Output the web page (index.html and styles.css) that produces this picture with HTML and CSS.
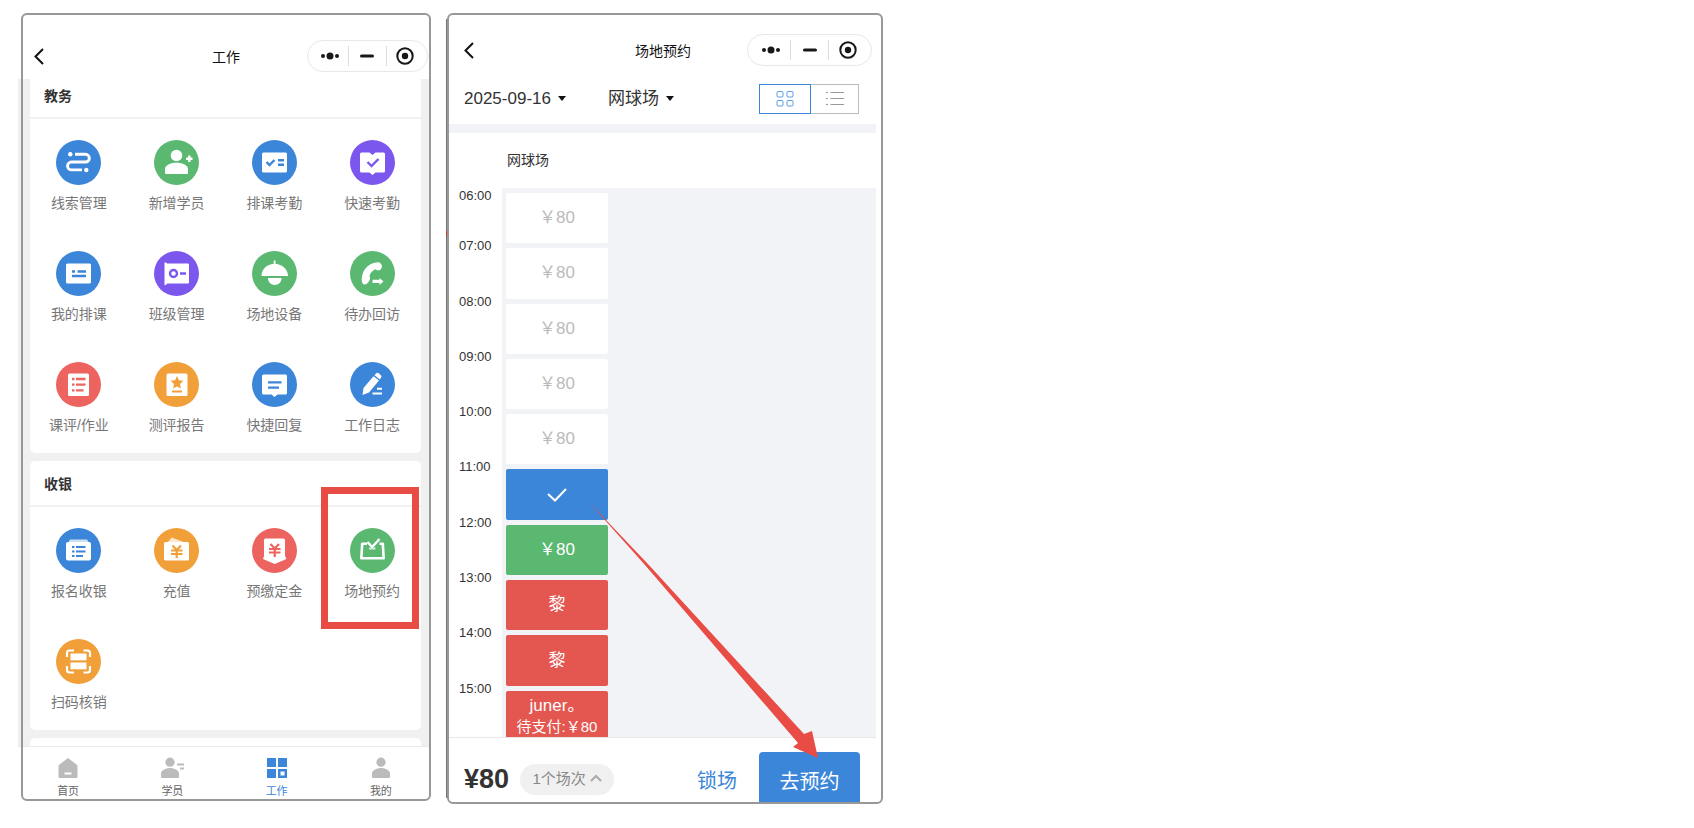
FILE: index.html
```html
<!DOCTYPE html>
<html lang="zh-CN">
<head>
    <meta charset="UTF-8">
    <meta name="viewport" content="width=device-width, initial-scale=1.0">
    <title>场地预约</title>
    <link rel="stylesheet" href="styles.css">
</head>
<body>
    <main class="screens">
        <!-- 工作台 -->
        <section class="phone phone-work">
            <header class="nav-bar">
                <button class="back" aria-label="返回">
                    <svg width="10" height="17" viewBox="0 0 10 17"><path d="M9 1L1.500 8.500L9 16"/></svg>
                </button>
                <h1>工作</h1>
                <div class="capsule">
                    <button aria-label="更多"><svg width="20" height="20" viewBox="0 0 20 20"><circle cx="3" cy="10" r="2"/><circle cx="10" cy="10" r="3.500"/><circle cx="17" cy="10" r="2"/></svg></button>
                    <button aria-label="最小化"><svg width="20" height="20" viewBox="0 0 20 20"><path class="bar" d="M4.500 10H15.500"/></svg></button>
                    <button aria-label="关闭"><svg width="20" height="20" viewBox="0 0 20 20"><circle class="ring" cx="10" cy="10" r="7.700"/><circle cx="10" cy="10" r="3.200"/></svg></button>
                </div>
            </header>

            <div class="work-body">
                <section class="card">
                    <h2>教务</h2>
                    <div class="menu">
                        <a href="#" class="menu-item">
                            <svg class="icon blue" viewBox="0 0 45 45"><circle cx="14.300" cy="14.300" r="2.200" class="w"/><circle cx="30.300" cy="30" r="2.200" class="w"/><path class="s" d="M19 14.300H29.500a3.800 3.800 0 0 1 0 7.700H15.500a3.900 3.900 0 0 0 0 7.900H26" stroke-width="2.900"/></svg>
                            <span>线索管理</span>
                        </a>
                        <a href="#" class="menu-item">
                            <svg class="icon green" viewBox="0 0 45 45"><circle cx="22.500" cy="15.500" r="5.800" class="w"/><path class="w" d="M11 33V28C14 21 31 21 34 28V33a1 1 0 0 1-1 1H12a1 1 0 0 1-1-1z"/><path class="s" d="M35.300 15.500V22M32 18.700H38.500" stroke-width="2.400"/></svg>
                            <span>新增学员</span>
                        </a>
                        <a href="#" class="menu-item">
                            <svg class="icon blue" viewBox="0 0 45 45"><rect x="10" y="12.500" width="25" height="20" rx="1.500" class="w"/><path class="c" d="M14.500 22L17.500 25L22.500 20M26 20.300H32M26 24.700H32" stroke-width="2.400"/></svg>
                            <span>排课考勤</span>
                        </a>
                        <a href="#" class="menu-item">
                            <svg class="icon purple" viewBox="0 0 45 45"><path class="w" d="M11.500 12.500H19.500L22.500 15L25.500 12.500H33.500a1.500 1.500 0 0 1 1.500 1.500V31a1.500 1.500 0 0 1-1.500 1.500H25.500L22.500 35L19.500 32.500H11.500a1.500 1.500 0 0 1-1.500-1.500V14a1.500 1.500 0 0 1 1.500-1.500z"/><path class="c" d="M17.500 22L21.500 26L28.500 19" stroke-width="2.400"/></svg>
                            <span>快速考勤</span>
                        </a>
                        <a href="#" class="menu-item">
                            <svg class="icon blue" viewBox="0 0 45 45"><rect x="10" y="12.500" width="25" height="20" rx="1.500" class="w"/><path class="c" d="M16 20.500H19M21.500 20.500H30M16 25H30" stroke-width="2.300"/></svg>
                            <span>我的排课</span>
                        </a>
                        <a href="#" class="menu-item">
                            <svg class="icon purple" viewBox="0 0 45 45"><path class="w" d="M10.500 11.500H12L13 12.500H34a1 1 0 0 1 1 1V31.500a1 1 0 0 1-1 1H13L12 34H10.500z"/><circle cx="19.500" cy="22.500" r="3.500" class="c" stroke-width="2.400"/><path class="c" d="M26 22.500H32" stroke-width="2.300"/></svg>
                            <span>班级管理</span>
                        </a>
                        <a href="#" class="menu-item">
                            <svg class="icon green" viewBox="0 0 45 45"><path class="w" d="M9.500 25C9.500 18 15 13.500 21.700 12.800V9.500H23.500V12.800C30 13.500 36 18 36 25z"/><path class="w" d="M16 27H29.500C29.500 36.300 16 36.300 16 27z"/></svg>
                            <span>场地设备</span>
                        </a>
                        <a href="#" class="menu-item">
                            <svg class="icon green" viewBox="0 0 45 45"><path class="w" d="M13.500 33.300C10.500 31 11.500 23 15 18Q20.500 11 29 11.300Q32.500 13 31.800 16.500Q30.800 19.500 28 19.500L25 18.300Q20.500 21 19.500 25Q21 28 18.500 31Q16 34.300 13.500 33.300z"/><path class="w" d="M22.500 28.800H29.500V27L33.500 30.500L29.500 34V32H22.500z"/></svg>
                            <span>待办回访</span>
                        </a>
                        <a href="#" class="menu-item">
                            <svg class="icon coral" viewBox="0 0 45 45"><rect x="12" y="11.500" width="21" height="22.500" rx="1.500" class="w"/><path class="c" d="M16 17H18.500M20 17H29.500M16 22.700H18.500M20 22.700H29.500M16 28.400H18.500M20 28.400H27.500" stroke-width="2.300"/></svg>
                            <span>课评/作业</span>
                        </a>
                        <a href="#" class="menu-item">
                            <svg class="icon orange" viewBox="0 0 45 45"><rect x="12.500" y="11.500" width="21" height="22.500" rx="1.500" class="w"/><path class="f" d="M23 14L24.900 18.200L29.300 18.700L26 21.900L26.800 26.600L23 24.400L19.200 26.600L20 21.900L16.700 18.700L21.100 18.200z"/><path class="c" d="M18 29.500H28" stroke-width="2.200"/></svg>
                            <span>测评报告</span>
                        </a>
                        <a href="#" class="menu-item">
                            <svg class="icon blue" viewBox="0 0 45 45"><path class="w" d="M11.500 12.500H33.500a1.500 1.500 0 0 1 1.500 1.500V31a1.500 1.500 0 0 1-1.500 1.500H25.500L22.500 35L19.500 32.500H11.500a1.500 1.500 0 0 1-1.500-1.500V14a1.500 1.500 0 0 1 1.500-1.500z"/><path class="c" d="M16 20.300H29.500M16 25.600H27" stroke-width="2.300"/></svg>
                            <span>快捷回复</span>
                        </a>
                        <a href="#" class="menu-item">
                            <svg class="icon blue" viewBox="0 0 45 45"><path class="w" d="M12.500 33L13.500 26L23.500 14.300L29 18.600L19 30.500z"/><path class="w" d="M24.500 13.300L26.300 11.200Q27.500 10.300 28.700 11.200L31 13.200Q32 14.500 31 15.800L29.800 17.500z"/><path class="s" d="M27 26.700H32M22.500 31.500H32" stroke-width="1.900"/></svg>
                            <span>工作日志</span>
                        </a>
                    </div>
                </section>

                <section class="card">
                    <h2>收银</h2>
                    <div class="menu">
                        <a href="#" class="menu-item">
                            <svg class="icon blue" viewBox="0 0 45 45"><path class="w pale" d="M14 11.500H31L33 15H12z"/><rect x="10" y="14" width="25" height="18.500" rx="2" class="w"/><path class="c" d="M16 19H18.500M20 19H29.500M16 23.500H18.500M20 23.500H29.500M16 28H18.500M20 28H27" stroke-width="2.200"/></svg>
                            <span>报名收银</span>
                        </a>
                        <a href="#" class="menu-item">
                            <svg class="icon orange" viewBox="0 0 45 45"><path class="w pale" d="M14 14L17.500 9.500L31 14.500z"/><rect x="10" y="14" width="25" height="18.500" rx="1.500" class="w"/><path class="c" d="M18.500 17.500L22.700 22L27 17.500M17 22.500H28.500M17 26H28.500M22.700 22V30" stroke-width="2.200"/></svg>
                            <span>充值</span>
                        </a>
                        <a href="#" class="menu-item">
                            <svg class="icon coral" viewBox="0 0 45 45"><path class="w" d="M13.500 10.500H31.500a1.500 1.500 0 0 1 1.500 1.500V28L34.500 31L22.700 36L11 31L12 28V12a1.500 1.500 0 0 1 1.500-1.500z"/><path class="c" d="M18.500 16L22.700 20.500L27 16M17 21H28.500M17 24.500H28.500M22.700 20.500V29" stroke-width="2.200"/></svg>
                            <span>预缴定金</span>
                        </a>
                        <a href="#" class="menu-item marked">
                            <svg class="icon green" viewBox="0 0 45 45"><path class="s" d="M17 15.700H12.200L11.300 30.300H33.700L32.800 15.700H29.500" stroke-width="2.600"/><path class="s" d="M17.500 14L22.200 19L29.500 11" stroke-width="2.400"/><path class="s pale" d="M19 20.500H25.500" stroke-width="2"/></svg>
                            <span>场地预约</span>
                        </a>
                        <a href="#" class="menu-item">
                            <svg class="icon orange" viewBox="0 0 45 45"><path class="s" d="M11 18V14a2.500 2.500 0 0 1 2.500-2.500H18M27.500 11.500H31.500a2.500 2.500 0 0 1 2.500 2.500V18M34 27V31a2.500 2.500 0 0 1-2.500 2.500H27.500M18 33.500H13.500a2.500 2.500 0 0 1-2.500-2.500V27" stroke-width="2.200"/><rect x="14.500" y="14.500" width="16" height="6.800" class="w"/><rect x="14.500" y="23.500" width="16" height="6.800" class="w"/></svg>
                            <span>扫码核销</span>
                        </a>
                    </div>
                </section>

                <section class="card card-next"></section>
            </div>

            <nav class="tab-bar">
                <a href="#"><svg width="24" height="22" viewBox="0 0 24 22"><path d="M12 1L20.500 7.500a2 2 0 0 1 1 1.500V20a1 1 0 0 1-1 1H3.500a1 1 0 0 1-1-1V9a2 2 0 0 1 1-1.500z"/><path d="M8.500 16.500H15.500" stroke="#fff" stroke-width="2"/></svg><span>首页</span></a>
                <a href="#"><svg width="24" height="22" viewBox="0 0 24 22"><circle cx="10" cy="5.200" r="4.600"/><path d="M1 20V15.500C4 9.500 16 9.500 19 15.500V20a1 1 0 0 1-1 1H2a1 1 0 0 1-1-1z"/><path d="M17 7.500H24M20 11.500H24" stroke="#bbb" stroke-width="2"/></svg><span>学员</span></a>
                <a href="#" class="current"><svg width="24" height="22" viewBox="0 0 24 22"><path d="M2 1H11V10H2zM13 1H22V10H13zM2 12H11V21H2zM13 12H22V21H13z"/><rect x="15.500" y="14.500" width="4" height="4" fill="#fff"/></svg><span>工作</span></a>
                <a href="#"><svg width="24" height="22" viewBox="0 0 24 22"><circle cx="12" cy="5.200" r="4.600"/><path d="M3 20V15.500C6 9.500 18 9.500 21 15.500V20a1 1 0 0 1-1 1H4a1 1 0 0 1-1-1z"/></svg><span>我的</span></a>
            </nav>
        </section>

        <!-- 场地预约 -->
        <section class="phone phone-booking">
            <header class="nav-bar">
                <button class="back" aria-label="返回">
                    <svg width="10" height="17" viewBox="0 0 10 17"><path d="M9 1L1.500 8.500L9 16"/></svg>
                </button>
                <h1>场地预约</h1>
                <div class="capsule">
                    <button aria-label="更多"><svg width="20" height="20" viewBox="0 0 20 20"><circle cx="3" cy="10" r="2"/><circle cx="10" cy="10" r="3.500"/><circle cx="17" cy="10" r="2"/></svg></button>
                    <button aria-label="最小化"><svg width="20" height="20" viewBox="0 0 20 20"><path class="bar" d="M4.500 10H15.500"/></svg></button>
                    <button aria-label="关闭"><svg width="20" height="20" viewBox="0 0 20 20"><circle class="ring" cx="10" cy="10" r="7.700"/><circle cx="10" cy="10" r="3.200"/></svg></button>
                </div>
            </header>

            <div class="filters">
                <button class="picker picker-date">2025-09-16</button>
                <button class="picker">网球场</button>
                <div class="view-switch">
                    <button class="active" aria-label="网格"><svg width="20" height="20" viewBox="0 0 20 20"><rect x="2" y="2.500" width="6" height="5.500" rx="1"/><rect x="12" y="2.500" width="6" height="5.500" rx="1"/><rect x="2" y="11.500" width="6" height="5.500" rx="1"/><rect x="12" y="11.500" width="6" height="5.500" rx="1"/></svg></button>
                    <button aria-label="列表"><svg width="20" height="20" viewBox="0 0 20 20"><path d="M1 3.500H3M5.500 3.500H19M1 9.500H3M5.500 9.500H19M1 15.500H3M5.500 15.500H19"/></svg></button>
                </div>
            </div>

            <h2 class="court-name">网球场</h2>

            <div class="schedule">
                <div class="times">
                    <span>06:00</span>
                    <span>07:00</span>
                    <span>08:00</span>
                    <span>09:00</span>
                    <span>10:00</span>
                    <span>11:00</span>
                    <span>12:00</span>
                    <span>13:00</span>
                    <span>14:00</span>
                    <span>15:00</span>
                </div>
                <div class="court">
                    <div class="slots">
                        <button class="slot">￥80</button>
                        <button class="slot">￥80</button>
                        <button class="slot">￥80</button>
                        <button class="slot">￥80</button>
                        <button class="slot">￥80</button>
                        <button class="slot picked" aria-label="已选"><svg width="20" height="14" viewBox="0 0 20 14"><path d="M1 6L8 12.500L19 1"/></svg></button>
                        <button class="slot free">￥80</button>
                        <button class="slot taken">黎</button>
                        <button class="slot taken">黎</button>
                        <button class="slot taken">juner。<small>待支付:￥80</small></button>
                    </div>
                </div>
            </div>

            <footer class="checkout">
                <strong>¥80</strong>
                <button class="count">1个场次<svg width="12" height="8" viewBox="0 0 12 8"><path d="M1 7L6 2L11 7"/></svg></button>
                <button class="lock">锁场</button>
                <button class="book">去预约</button>
            </footer>

            <svg class="arrow" width="232" height="260" viewBox="0 0 232 260"><path d="M0 0L60 63L217 234L225 231L231 258L206 247L211 243L58 65z"/></svg>
        </section>
    </main>
</body>
</html>
```
FILE: styles.css
```css
* {
    box-sizing: border-box;
}

body {
    margin: 0;
    background-color: #fff;
    color: #333;
    font-family: 'Liberation Sans', 'Noto Sans CJK SC', sans-serif;
    font-size: 14px;
}

button {
    padding: 0;
    border: none;
    background: none;
    color: inherit;
    font: inherit;
    cursor: pointer;
}

a {
    color: inherit;
    text-decoration: none;
}

h1, h2 {
    margin: 0;
    font-size: 14px;
}

svg {
    display: block;
    fill: none;
}

.screens {
    display: flex;
    align-items: flex-start;
    gap: 16px;
    padding: 13px 18px;
}

.phone {
    position: relative;
    display: flex;
    flex-direction: column;
}

/* frame lies over the screen content */
.phone::after {
    content: '';
    position: absolute;
    inset: 0;
    border: 2px solid #989896;
    border-radius: 6px;
    pointer-events: none;
}

.phone-work {
    flex: 0 1 413px;
}

.phone-work::after {
    left: 3px;
}

.phone-booking {
    flex: 0 1 436px;
    padding: 0 7px 2px 2px;
}

/* edge of the screen behind */
.phone-booking::before {
    content: '';
    position: absolute;
    inset: 6px auto 6px -1px;
    width: 1px;
    background: linear-gradient(#777 212px, #c0392b 212px, #c0392b 217px, #777 217px);
}

/* top bar */
.nav-bar {
    display: grid;
    grid-template-columns: 1fr auto 1fr;
    align-items: center;
    height: 66px;
    padding: 20px 3px 0 6px;
}

.nav-bar h1 {
    color: #111;
    font-weight: 400;
}

.back {
    padding-left: 10px;
}

.back path {
    stroke: #111;
    stroke-width: 2;
}

.capsule {
    display: flex;
    align-items: center;
    justify-self: end;
    width: 121px;
    height: 32px;
    padding: 0 4px;
    border: 1px solid #e8e8e8;
    border-radius: 16px;
}

.capsule button {
    display: flex;
    flex: 1;
    justify-content: center;
}

.capsule button + button {
    border-left: 1px solid #ddd;
}

.capsule svg {
    fill: #181818;
}

.capsule .bar {
    stroke: #181818;
    stroke-width: 3;
    stroke-linecap: round;
}

.capsule .ring {
    fill: none;
    stroke: #181818;
    stroke-width: 2;
}

/* work menu */
.work-body {
    height: 668px;
    padding: 0 10px 0 12px;
    border-bottom: 1px solid #eaeaea;
    background-color: #f0f0f0;
    overflow: hidden;
}

.card {
    margin-bottom: 8px;
    border-radius: 5px;
    background-color: #fff;
}

.card:first-child {
    margin-top: -6px;
}

.card h2 {
    height: 46px;
    padding-left: 14px;
    border-bottom: 2px solid #f2f2f2;
    line-height: 46px;
}

.card-next {
    height: 46px;
}

.menu {
    display: grid;
    grid-template-columns: repeat(4, 1fr);
    row-gap: 38px;
    padding: 21px 0 18px;
}

.menu-item {
    position: relative;
    display: flex;
    flex-direction: column;
    align-items: center;
    gap: 8px;
    color: #777;
    line-height: 20px;
}

.marked::after {
    content: '';
    position: absolute;
    inset: -41px 2px -28px -2px;
    border: 7px solid #e84c44;
}

.icon {
    width: 45px;
    height: 45px;
    border-radius: 50%;
    background-color: currentColor;
}

.icon .w {
    fill: #fff;
}

.icon .s {
    stroke: #fff;
    stroke-linejoin: round;
}

.icon .c {
    stroke: currentColor;
}

.icon .f {
    fill: currentColor;
}

.icon .pale {
    opacity: 0.75;
}

.blue {
    color: #3b86d8;
}

.green {
    color: #5ab871;
}

.purple {
    color: #7b57ee;
}

.coral {
    color: #ed635f;
}

.orange {
    color: #f19f38;
}

.tab-bar {
    display: grid;
    grid-template-columns: repeat(4, 1fr);
    height: 54px;
    margin: 0 -2px;
    padding-top: 10px;
    color: #666;
    font-size: 11px;
    line-height: 16px;
}

.tab-bar a {
    display: flex;
    flex-direction: column;
    align-items: center;
    gap: 4px;
}

.tab-bar svg {
    fill: #bbb;
}

.tab-bar .current {
    color: #3b86d8;
}

.tab-bar .current svg {
    fill: #3b86d8;
}

/* booking */
.phone-booking .nav-bar {
    padding: 8px 4px 0 5px;
}

.phone-booking .capsule {
    width: 125px;
}

.filters {
    display: flex;
    align-items: center;
    height: 54px;
    padding: 0 17px 6px 15px;
    border-bottom: 9px solid #f2f3f7;
}

.picker {
    display: flex;
    align-items: center;
    gap: 7px;
    font-size: 17px;
    line-height: 20px;
}

.picker::after {
    content: '';
    border: 4px solid transparent;
    border-top: 5px solid #111;
    border-bottom: 0;
}

.picker-date {
    margin-right: 42px;
}

.view-switch {
    display: flex;
    margin-left: auto;
}

.view-switch button {
    display: flex;
    align-items: center;
    justify-content: center;
    width: 48px;
    height: 30px;
    border: 1px solid #bbb;
    border-left: 0;
}

.view-switch .active {
    width: 52px;
    border: 1px solid #3b86d8;
}

.view-switch path {
    stroke: #999;
    stroke-width: 1;
}

.view-switch rect {
    stroke: #5a9fe6;
    stroke-width: 1;
}

.court-name {
    padding-left: 58px;
    font-weight: 400;
    line-height: 55px;
}

.schedule {
    display: flex;
    height: 549px;
    overflow: hidden;
}

.times,
.slots {
    display: grid;
    grid-template-rows: repeat(10, 1fr);
    gap: 5px;
    height: 548px;
}

.times {
    width: 53px;
    margin-top: 5px;
    padding-left: 10px;
    font-size: 13px;
    line-height: 16px;
}

.times span {
    margin-top: -10px;
}

.times span:first-child {
    margin-top: -5px;
}

.court {
    flex: 1;
    padding: 5px 4px;
    background-color: #f2f3f7;
}

.slots {
    width: 102px;
}

.slot {
    display: flex;
    flex-direction: column;
    align-items: center;
    justify-content: center;
    border-radius: 2px;
    background-color: #fff;
    color: #bbb;
    font-size: 17px;
    line-height: 22px;
}

.slot small {
    font-size: 15px;
    line-height: 20px;
}

.slot path {
    stroke: #fff;
    stroke-width: 2;
}

.picked {
    background-color: #3b86d8;
}

.free {
    background-color: #5ab871;
    color: #fff;
}

.taken {
    background-color: #e45650;
    color: #fff;
}

.checkout {
    display: flex;
    align-items: center;
    height: 65px;
    padding: 0 16px 0 15px;
    border-top: 1px solid #e8e8e8;
    color: #3b86d8;
    font-size: 20px;
}

.checkout strong {
    margin: 18px 11px 0 0;
    color: #333;
    font-size: 27px;
}

.count {
    display: flex;
    align-items: center;
    justify-content: center;
    gap: 4px;
    width: 94px;
    height: 31px;
    margin-top: 18px;
    padding-bottom: 3px;
    border-radius: 16px;
    background-color: #f0f0f0;
    color: #888;
    font-size: 15px;
}

.count path {
    stroke: #aaa;
    stroke-width: 2;
}

.lock {
    margin: 18px 22px 0 auto;
}

.book {
    align-self: flex-end;
    width: 101px;
    height: 50px;
    padding-top: 6px;
    border-radius: 4px 4px 0 0;
    background-color: #3b86d8;
    color: #fff;
}

/* pointer from the picked slot to the booking button */
.arrow {
    position: absolute;
    top: 487px;
    right: 64px;
    fill: #e84c44;
    pointer-events: none;
}
```
